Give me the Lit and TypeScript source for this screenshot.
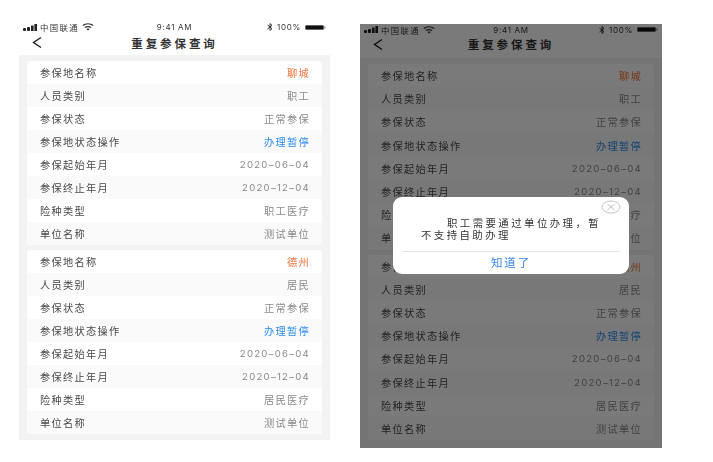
import { LitElement, html, css, svg } from "lit";
import { customElement, property } from "lit/decorators.js";

type Row = [string, string, string?];
const card = (city: string, kind: string, ins: string): Row[] => [
  ["参保地名称", city, "orange"],
  ["人员类别", kind],
  ["参保状态", "正常参保"],
  ["参保地状态操作", "办理暂停", "blue"],
  ["参保起始年月", "2020–06–04"],
  ["参保终止年月", "2020–12–04"],
  ["险种类型", ins],
  ["单位名称", "测试单位"],
];
const cards = [card("聊城", "职工", "职工医疗"), card("德州", "居民", "居民医疗")];

@customElement("phone-screen")
class PhoneScreen extends LitElement {
  @property({ type: Boolean }) dimmed = false;
  static styles = css`
    :host { display: block; position: relative; font-family: "Noto Sans CJK SC", "Liberation Sans", sans-serif; }
    .blur { filter: blur(0.45px); }
    .status { height: var(--status); display: flex; align-items: center; padding: 0 4px; font-size: 8.4px; letter-spacing: 1.4px; color: #333; background: #fff; }
    .s-left, .s-right { flex: 1; display: flex; align-items: center; gap: 3px; }
    .s-right { justify-content: flex-end; gap: 4px; }
    .time, .pct { font-family: "Inter", sans-serif; font-size: 8px; letter-spacing: 0.7px; }
    .nav { height: var(--nav); box-sizing: border-box; padding-bottom: var(--nav-pb); position: relative; display: flex; align-items: center; justify-content: center; background: #fff; font-size: 11.5px; font-weight: 700; letter-spacing: 2.9px; color: #333; }
    .back { position: absolute; left: 13px; top: 0; bottom: var(--nav-pb); margin: auto 0; }
    .body { background: #f3f3f3; padding: 6px 8px var(--body-pb); display: flex; flex-direction: column; gap: 5px; }
    .card { background: #fff; border-radius: 3px; overflow: hidden; }
    .row { height: var(--row); padding: 0 13px; display: flex; align-items: center; justify-content: space-between; font-size: 10.2px; letter-spacing: 1.3px; color: #484848; }
    .row:nth-child(even) { background: #fafafa; }
    .val { color: #8a8a8a; letter-spacing: 1.3px; margin-right: -1px; }
    .num { font-family: "Inter", sans-serif; font-size: 9.6px; letter-spacing: 1.25px; }
    .orange { color: #f4743b; }
    .blue { color: #2a8cf0; }
    .shade { position: absolute; inset: 0; background: rgba(0,0,0,0.52); }
    .dialog { position: absolute; left: 33px; top: 173px; width: 236px; height: 77px; background: #fff; border-radius: 9px; color: #333; font-size: 10.4px; filter: blur(0.35px); }
    .msg { padding: 20px 10px 0 28px; height: 54px; box-sizing: border-box; letter-spacing: 2.45px; }
    .msg span { display: block; line-height: 12px; white-space: nowrap; }
    .msg .first { padding-left: 26px; }
    .ok { margin: 0 9px; border-top: 1px solid #e4e4e4; height: 20px; display: flex; align-items: center; justify-content: center; color: #3a86e8; font-size: 11.5px; letter-spacing: 1.8px; }
    .close { position: absolute; right: 8px; top: 3px; }
  `;
  render() {
    const bars = svg`<rect x="0" y="4" width="3" height="3" rx="1"/><rect x="4" y="3" width="3" height="4" rx=".8"/><rect x="8" y="1.5" width="2.6" height="5.5"/><rect x="11.4" y="0" width="2.6" height="7"/>`;
    return html`
      <div class="blur">
        <div class="status">
          <div class="s-left">
            <svg width="14" height="7" fill="#222">${bars}</svg>
            <span>中国联通</span>
            <svg width="12" height="8" viewBox="0 0 12 8" fill="none" stroke="#333" stroke-width="1.2"><path d="M.8 2.6C3.8.4 8.2.4 11.2 2.6M2.8 4.6c2-1.3 4.4-1.3 6.4 0"/><path d="M6 7.6 4.4 6c1-.6 2.2-.6 3.2 0z" fill="#333" stroke="none"/></svg>
          </div>
          <span class="time">9:41 AM</span>
          <div class="s-right">
            <svg width="6" height="8" viewBox="0 0 6 8" fill="none" stroke="#333" stroke-width="1"><path d="M.5 2 5 5.6 3 7.4V.6L5 2.4.5 6"/></svg>
            <span class="pct">100%</span>
            <svg width="21" height="5" viewBox="0 0 21 5"><rect x=".3" y=".3" width="18.4" height="4.4" rx="1.2" fill="#111" stroke="#888" stroke-width=".5"/><rect x="19.3" y="1.4" width="1.2" height="2.2" fill="#888"/></svg>
          </div>
        </div>
        <div class="nav">
          <svg class="back" width="10" height="13" viewBox="0 0 10 13" fill="none" stroke="#222" stroke-width="1.5"><path d="M9 1.5 1.6 6.5 9 11.5"/></svg>
          重复参保查询
        </div>
        <div class="body">
          ${cards.map(c => html`<div class="card">
            ${c.map(([k, v, cls]) => html`<div class="row"><span>${k}</span><span class="val ${cls ?? ""} ${v.startsWith("2020") ? "num" : ""}">${v}</span></div>`)}
          </div>`)}
        </div>
      </div>
      ${this.dimmed ? html`
        <div class="shade"></div>
        <div class="dialog">
          <svg class="close" width="20" height="14" viewBox="0 0 20 14" fill="none" stroke="#c4c4c4" stroke-width="1"><ellipse cx="10" cy="7" rx="9" ry="6"/><path d="M6.5 4l7 6M13.5 4l-7 6"/></svg>
          <div class="msg"><span class="first">职工需要通过单位办理，暂</span><span>不支持自助办理</span></div>
          <div class="ok">知道了</div>
        </div>` : ""}
    `;
  }
}

@customElement("app-root")
class AppRoot extends LitElement {
  static styles = css`
    :host { display: block; width: 713px; height: 462px; background: #fff; overflow: hidden; }
    .page { display: flex; align-items: flex-start; padding-left: 19px; }
    .left { width: 311px; margin-top: 20px; --row: 23px; --status: 14px; --nav: 21px; --nav-pb: 4px; --body-pb: 6px; }
    .right { width: 302px; margin-top: 24px; margin-left: 30px; --row: 23.2px; --status: 11px; --nav: 23px; --nav-pb: 5px; --body-pb: 8px; }
  `;
  render() {
    return html`<div class="page">
      <phone-screen class="left"></phone-screen>
      <phone-screen class="right" dimmed></phone-screen>
    </div>`;
  }
}
